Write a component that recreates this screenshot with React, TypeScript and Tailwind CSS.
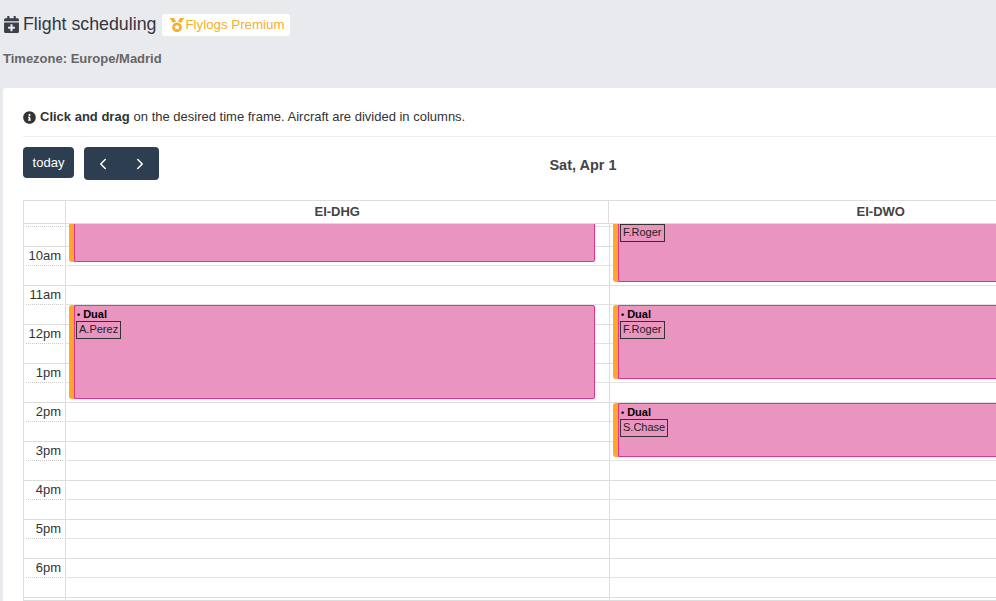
import { FaCalendarPlus, FaInfoCircle, FaMedal } from 'react-icons/fa';
import { ChevronLeft, ChevronRight } from 'lucide-react';

const hours = ['10am', '11am', '12pm', '1pm', '2pm', '3pm', '4pm', '5pm', '6pm'];

type Booking = { top: number; height: number; type?: string; pilot: string };

// top and height are px from the top of the scrolled time grid
const columns: { name: string; bookings: Booking[] }[] = [
  {
    name: 'EI-DHG',
    bookings: [
      { top: -41, height: 79, pilot: '' },
      { top: 81, height: 94, type: 'Dual', pilot: 'A.Perez' },
    ],
  },
  {
    name: 'EI-DWO',
    bookings: [
      { top: -21, height: 79, pilot: 'F.Roger' },
      { top: 81, height: 74, type: 'Dual', pilot: 'F.Roger' },
      { top: 179, height: 54, type: 'Dual', pilot: 'S.Chase' },
    ],
  },
];

function Event({ booking }: { booking: Booking }) {
  return (
    <div
      className="absolute left-[3px] right-[14px] rounded-[3px] border-l-[5px] border-[#ffa62b] text-[11px] leading-[13px] text-black"
      style={{ top: booking.top, height: booking.height }}
    >
      <div className="h-full overflow-hidden rounded-r-[2px] border border-[#e2338f] bg-[#ea94c0]">
        {booking.type && (
          <div className="h-[14px] pl-[2px] pt-[2px] font-bold">
            <span className="mr-[3px] text-[9px]">•</span>
            {booking.type}
          </div>
        )}
        {booking.pilot && (
          <div
            className={`ml-[1px] w-fit border border-[#333] px-[2px] pb-[2px] pt-[1px] text-[#222] ${
              booking.type ? 'mt-[1px]' : 'mt-[20px]'
            }`}
          >
            {booking.pilot}
          </div>
        )}
      </div>
    </div>
  );
}

function SlotLines() {
  return (
    <>
      <div className="h-[2px]" />
      <div className="h-[20px] border-t border-[#e3e3e3]" />
      {hours.map((h) => (
        <div key={h}>
          <div className="h-[19px] border-t border-[#ddd]" />
          <div className="h-[20px] border-t border-[#e3e3e3]" />
        </div>
      ))}
      <div className="h-[3px] border-t border-[#ddd]" />
    </>
  );
}

export default function App() {
  return (
    <div className="h-[601px] w-[996px] overflow-hidden bg-[#e9eaee] font-['Liberation_Sans',sans-serif] text-[#333]">
      {/* Header */}
      <div className="flex h-[50px] items-center pl-[3px]">
        <FaCalendarPlus className="mb-[2px] text-[17px] text-[#3a3f4a]" />
        <h1 className="mb-[1px] ml-[3px] text-[17.8px] leading-none text-[#33363f]">Flight scheduling</h1>
        <span className="ml-[6px] flex h-[22px] w-[128px] items-center rounded-[3px] bg-white pl-[8px] text-[13.3px] text-[#f5ae2d]">
          <FaMedal className="mr-[1px] text-[14px]" />
          Flylogs Premium
        </span>
      </div>
      <p className="ml-[3px] mt-[2px] text-[13px] font-bold leading-[14px] text-[#666]">Timezone: Europe/Madrid</p>

      {/* Card */}
      <div className="ml-[3px] mt-[22px] w-[1170px] rounded-tl-[3px] bg-white pl-[20px] pr-[20px]">
        <div className="flex h-[49px] items-center border-b border-[#eee] pt-[10px] text-[13px] text-[#333]">
          <FaInfoCircle className="mr-[4px] text-[13px] text-[#333]" />
          <b>Click and drag</b>
          <span className="ml-[4px]">on the desired time frame. Aircraft are divided in columns.</span>
        </div>

        {/* Toolbar */}
        <div className="mt-[10px] flex h-[33px] items-start justify-between">
          <div className="flex w-[136px] gap-[10px]">
            <button className="h-[31px] w-[51px] rounded-[4px] bg-[#2c3e50] text-[13px] font-medium text-white">today</button>
            <div className="flex h-[33px] w-[75px] shrink-0 items-center justify-around rounded-[4px] bg-[#2c3e50] text-white">
              <ChevronLeft size={18} strokeWidth={2} />
              <ChevronRight size={18} strokeWidth={2} />
            </div>
          </div>
          <h2 className="mt-[9px] text-[14.5px] font-bold leading-[18px] text-[#444]">Sat, Apr 1</h2>
          <div className="w-[146px]" />
        </div>

        {/* Calendar */}
        <div className="mt-[20px] w-[1130px] border-l border-t border-[#ddd]">
          <div className="flex h-[23px] border-b border-[#ddd] text-[13px] font-bold leading-[21px] text-[#444]">
            <div className="w-[42px] border-r border-[#ddd]" />
            {columns.map((c) => (
              <div key={c.name} className="w-[544px] border-r border-[#ddd] text-center">
                {c.name}
              </div>
            ))}
          </div>
          <div className="flex h-[377px] overflow-hidden border-b border-[#ddd]">
            <div className="w-[42px] shrink-0 border-r border-[#ddd] text-right text-[13px] leading-[18px] text-[#333]">
              <div className="h-[2px]" />
              <div className="mx-[2px] h-[20px] border-t border-dotted border-[#ccc]" />
              {hours.map((h) => (
                <div key={h}>
                  <div className="h-[19px] border-t border-[#ddd] pr-[4px]">{h}</div>
                  <div className="mx-[2px] h-[20px] border-t border-dotted border-[#ccc]" />
                </div>
              ))}
              <div className="h-[3px] border-t border-[#ddd]" />
            </div>
            {columns.map((c) => (
              <div key={c.name} className="relative w-[544px] shrink-0 overflow-hidden border-r border-[#ddd]">
                <SlotLines />
                {c.bookings.map((b) => (
                  <Event key={b.top} booking={b} />
                ))}
              </div>
            ))}
          </div>
        </div>
      </div>
    </div>
  );
}
